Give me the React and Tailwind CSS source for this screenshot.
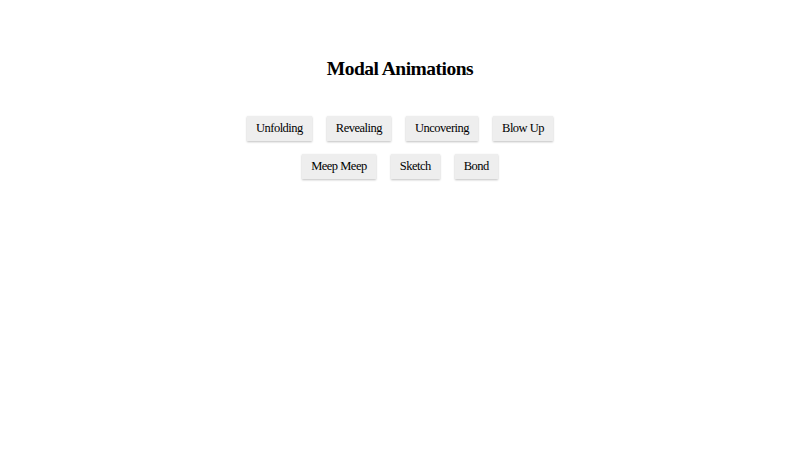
import React from 'react'

const animations = ['Unfolding', 'Revealing', 'Uncovering', 'Blow Up', 'Meep Meep', 'Sketch', 'Bond']

export default function App() {
  return (
    <div className="min-h-[450px] bg-white font-['Liberation_Serif',serif] text-black">
      <h1 className="pt-[57px] text-center text-[19.5px] font-bold leading-[24px] tracking-[-0.5px]">Modal Animations</h1>
      <div className="mx-auto mt-[35px] flex max-w-[340px] flex-wrap justify-center gap-x-[15px] gap-y-[13px]">
        {animations.map(name => (
          <button
            key={name}
            className="h-[25px] bg-[#eeeeee] px-[9px] text-[12.5px] leading-[25px] tracking-[-0.5px] shadow-[0_1px_2px_rgba(0,0,0,0.25)]"
          >
            {name}
          </button>
        ))}
      </div>
    </div>
  )
}
